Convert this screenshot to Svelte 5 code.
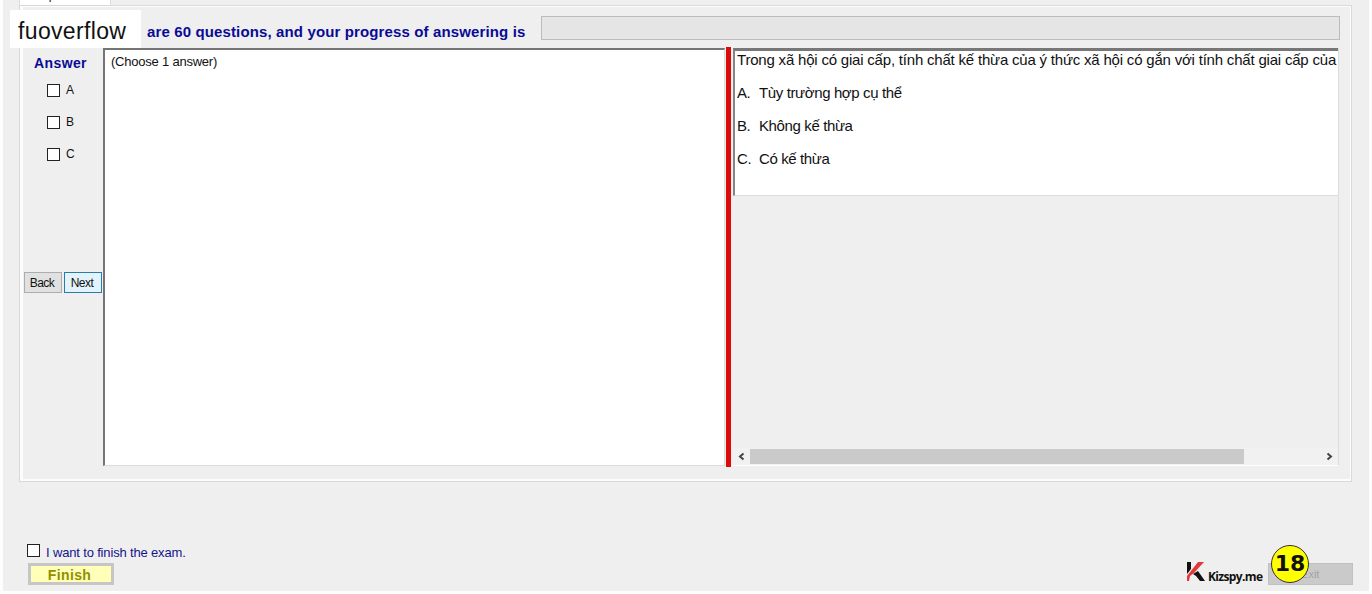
<script>
  let answers = $state([
    { label: 'A', checked: false },
    { label: 'B', checked: false },
    { label: 'C', checked: false }
  ]);

  const choices = [
    { key: 'A.', text: 'Tùy trường hợp cụ thể' },
    { key: 'B.', text: 'Không kế thừa' },
    { key: 'C.', text: 'Có kế thừa' }
  ];

  let wantFinish = $state(false);
</script>

<div class="form">
  <div class="tab"><span>Multiple Choices</span></div>

  <div class="panel">
    <div class="top">
      <h1>are 60 questions, and your progress of answering is</h1>
      <div class="progress"></div>
    </div>

    <div class="main">
      <div class="sidebar">
        <h2>Answer</h2>
        {#each answers as answer}
          <label class="option">
            <input type="checkbox" bind:checked={answer.checked}>
            <span>{answer.label}</span>
          </label>
        {/each}
        <div class="nav">
          <button>Back</button>
          <button class="focused">Next</button>
        </div>
      </div>

      <div class="paper"><span>(Choose 1 answer)</span></div>
      <div class="splitter"></div>

      <div class="viewer">
        <div class="question">
          <p class="title">Trong xã hội có giai cấp, tính chất kế thừa của ý thức xã hội có gắn với tính chất giai cấp của</p>
          {#each choices as choice}
            <p><span class="key">{choice.key}</span><span>{choice.text}</span></p>
          {/each}
        </div>
        <div class="scrollbar">
          <svg width="17" height="17" viewBox="0 0 17 17"><path d="M10.5 5.5 L7 8.5 L10.5 11.5" /></svg>
          <div class="track"><div class="thumb"></div></div>
          <svg width="17" height="17" viewBox="0 0 17 17"><path d="M6.5 5.5 L10 8.5 L6.5 11.5" /></svg>
        </div>
      </div>
    </div>
  </div>

  <div class="footer">
    <div class="finish">
      <label>
        <input type="checkbox" bind:checked={wantFinish}>
        <span>I want to finish the exam.</span>
      </label>
      <button disabled={!wantFinish}>Finish</button>
    </div>
    <div class="brand">
      <svg width="20" height="21" viewBox="0 0 20 21">
        <path d="M1 1h4v7l-4 5z" fill="#111" />
        <path d="M1 20v-5L12 1h6L8 12l-4 3-1 5z" fill="#e2373b" />
        <path d="M7 13l5-3 7 10h-5l-4-5z" fill="#111" />
      </svg>
      <span>Kizspy.me</span>
    </div>
    <button class="exit" disabled>Exit</button>
  </div>

  <div class="watermark"><span>fuoverflow</span></div>
  <div class="badge">18</div>
</div>

<style>
  :global(body) {
    background: #fdfdfd;
    overflow: hidden;
  }

  .form {
    position: relative;
    box-sizing: border-box;
    width: 1366px;
    height: 591px;
    margin-left: 3px;
    padding: 0 16px;
    background: #efefef;
    font-family: "Liberation Sans", Arial, sans-serif;
    color: #111;
  }

  h1, h2, p {
    margin: 0;
  }

  .tab {
    width: 90px;
    height: 5px;
    border: 1px solid #dcdcdc;
    border-width: 0 1px;
    background: #fff;
    overflow: hidden;
  }

  .tab span {
    display: block;
    margin: -11px 0 0 5px;
    font-size: 12px;
    line-height: 13px;
    letter-spacing: -0.3px;
    white-space: nowrap;
  }

  .panel {
    box-sizing: border-box;
    width: 1333px;
    height: 477px;
    padding-left: 3px;
    border: 1px solid #d9d9d9;
    box-shadow: inset 3px -2px 0 #fcfcfc, inset -1px 1px 0 #fcfcfc;
  }

  .top {
    display: flex;
    height: 42px;
  }

  h1 {
    width: 394px;
    padding: 17px 0 0 124px;
    font-size: 15px;
    line-height: 18px;
    letter-spacing: 0.13px;
    white-space: nowrap;
    color: #0a0a96;
  }

  .progress {
    box-sizing: border-box;
    width: 799px;
    height: 24px;
    margin-top: 10px;
    border: 1px solid #bcbcbc;
    background: #e5e5e5;
  }

  .main {
    display: flex;
    height: 418px;
  }

  .sidebar {
    width: 80px;
  }

  h2 {
    height: 27px;
    padding: 7px 0 0 11px;
    font-size: 14px;
    line-height: 17px;
    letter-spacing: 0.4px;
    color: #0a0a96;
  }

  input {
    appearance: none;
    box-sizing: border-box;
    flex: none;
    width: 13px;
    height: 13px;
    margin: 0;
    border: 1px solid #222;
    background: #fff;
  }

  .option {
    display: flex;
    align-items: center;
    height: 16px;
    margin-bottom: 16px;
    padding-left: 24px;
    font-size: 12px;
  }

  .option span {
    margin: -1px 0 0 6px;
  }

  .nav {
    display: flex;
    gap: 2px;
    padding: 94px 0 0 1px;
  }

  .nav button {
    width: 38px;
    height: 21px;
    padding: 0 2px 0 0;
    border: 1px solid #adadad;
    background: #e1e1e1;
    font: 12px "Liberation Sans", Arial, sans-serif;
    letter-spacing: -0.5px;
    color: #111;
  }

  .nav .focused {
    border-color: #2b7ba8;
    background: #e3f3fb;
  }

  .paper {
    box-sizing: border-box;
    width: 622px;
    padding: 4px 6px;
    border: 1px solid #dcdcdc;
    border-top: 2px solid #747474;
    border-left: 2px solid #747474;
    background: #fff;
    font-size: 13px;
    line-height: 15px;
    letter-spacing: -0.22px;
  }

  .splitter {
    width: 5px;
    height: 420px;
    margin: -1px 2px 0 1px;
    background: #dc0b08;
  }

  .viewer {
    display: flex;
    flex-direction: column;
    justify-content: space-between;
    box-sizing: border-box;
    width: 606px;
    border-right: 1px solid #dcdcdc;
    border-bottom: 1px solid #fff;
  }

  .question {
    box-sizing: border-box;
    height: 148px;
    padding-left: 2px;
    border-top: 3px solid #777;
    border-left: 2px solid #858585;
    border-bottom: 1px solid #dcdcdc;
    background: #fff;
    font-size: 15px;
    line-height: 17px;
    letter-spacing: -0.38px;
    white-space: nowrap;
    overflow: hidden;
  }

  .question p {
    display: flex;
    height: 33px;
  }

  .question .title {
    letter-spacing: -0.2px;
  }

  .key {
    width: 22px;
  }

  .scrollbar {
    display: flex;
    height: 17px;
    background: #f1f1f1;
  }

  .scrollbar path {
    fill: none;
    stroke: #444;
    stroke-width: 2;
  }

  .track {
    flex: 1;
    padding: 1px 0;
  }

  .thumb {
    width: 494px;
    height: 15px;
    background: #cacaca;
  }

  .footer {
    display: flex;
    height: 109px;
  }

  .finish {
    width: 1149px;
    padding: 61px 0 0 8px;
  }

  .finish label {
    display: flex;
    align-items: center;
    height: 18px;
    font-size: 13px;
    letter-spacing: -0.16px;
    color: #14148c;
  }

  .finish input {
    margin-top: -3px;
  }

  .finish span {
    margin-left: 6px;
  }

  .finish button {
    display: block;
    width: 86px;
    height: 22px;
    margin: 2px 0 0 1px;
    padding: 2px 3px 0 0;
    border: 3px solid #c6c6c6;
    background: #ffffb8;
    font: bold 14px/14px "Liberation Sans", Arial, sans-serif;
    letter-spacing: 0.4px;
    color: #909000;
  }

  .brand {
    display: flex;
    box-sizing: border-box;
    width: 99px;
    padding: 79px 0 0 17px;
  }

  .brand span {
    margin: 8px 0 0 2px;
    font: bold 12px/16px "Open Sans", "Noto Sans", sans-serif;
    letter-spacing: -0.65px;
  }

  .exit {
    width: 86px;
    height: 22px;
    margin-top: 81px;
    padding: 0;
    border: 1px solid #c0c0c0;
    background: #cacaca;
    font: 11px "Liberation Sans", Arial, sans-serif;
    color: #a3a3a3;
  }

  /* sits over the start of the heading */
  .watermark {
    position: absolute;
    left: 7px;
    top: 10px;
    width: 123px;
    height: 38px;
    padding-left: 8px;
    background: #fff;
    font: 23px/43px "Liberation Sans", Arial, sans-serif;
    letter-spacing: 0.35px;
  }

  .badge {
    position: absolute;
    left: 1268px;
    top: 545px;
    box-sizing: border-box;
    width: 38px;
    height: 38px;
    border: 1px solid #333;
    border-radius: 50%;
    background: #ffff00;
    font: bold 22px/36px "DejaVu Sans", sans-serif;
    text-align: center;
  }
</style>
